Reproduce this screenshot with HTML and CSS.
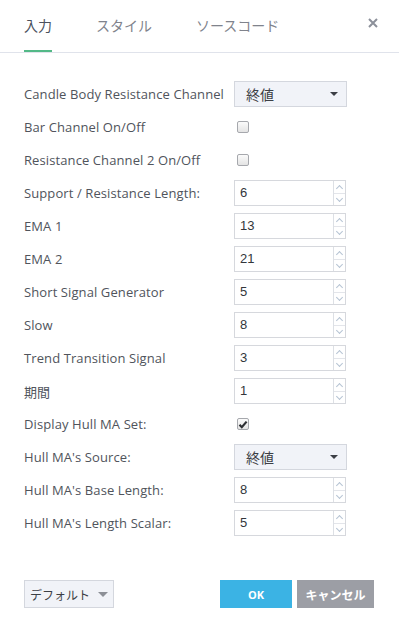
FILE: index.html
```html
<!DOCTYPE html>
<html lang="ja">
<head>
<meta charset="utf-8">
<link rel="stylesheet" href="styles.css">
</head>
<body>
<div class="dialog">
  <div class="header">
    <div class="tabs">
      <div class="tab active">入力</div>
      <div class="tab">スタイル</div>
      <div class="tab">ソースコード</div>
    </div>
    <div class="close">
      <svg width="10" height="10" viewBox="0 0 10 10"><path d="M1 1L9 9M9 1L1 9" stroke="#8c909a" stroke-width="2" stroke-linecap="butt"/></svg>
    </div>
  </div>
  <div class="form">
    <div class="row"><div class="label">Candle Body Resistance Channel</div><div class="select"><span>終値</span><i class="caret"></i></div></div>
    <div class="row"><div class="label">Bar Channel On/Off</div><div class="check"></div></div>
    <div class="row"><div class="label">Resistance Channel 2 On/Off</div><div class="check"></div></div>
    <div class="row"><div class="label">Support / Resistance Length:</div><div class="num"><span class="val">6</span><div class="spin"><b class="up"></b><b class="down"></b></div></div></div>
    <div class="row"><div class="label">EMA 1</div><div class="num"><span class="val">13</span><div class="spin"><b class="up"></b><b class="down"></b></div></div></div>
    <div class="row"><div class="label">EMA 2</div><div class="num"><span class="val">21</span><div class="spin"><b class="up"></b><b class="down"></b></div></div></div>
    <div class="row"><div class="label">Short Signal Generator</div><div class="num"><span class="val">5</span><div class="spin"><b class="up"></b><b class="down"></b></div></div></div>
    <div class="row"><div class="label">Slow</div><div class="num"><span class="val">8</span><div class="spin"><b class="up"></b><b class="down"></b></div></div></div>
    <div class="row"><div class="label">Trend Transition Signal</div><div class="num"><span class="val">3</span><div class="spin"><b class="up"></b><b class="down"></b></div></div></div>
    <div class="row"><div class="label">期間</div><div class="num"><span class="val">1</span><div class="spin"><b class="up"></b><b class="down"></b></div></div></div>
    <div class="row"><div class="label">Display Hull MA Set:</div><div class="check checked"><svg width="10" height="9" viewBox="0 0 10 9"><path d="M1.5 4.8L3.8 7.2L8.6 1.6" stroke="#2d2f33" stroke-width="2.2" fill="none"/></svg></div></div>
    <div class="row"><div class="label">Hull MA's Source:</div><div class="select"><span>終値</span><i class="caret"></i></div></div>
    <div class="row"><div class="label">Hull MA's Base Length:</div><div class="num"><span class="val">8</span><div class="spin"><b class="up"></b><b class="down"></b></div></div></div>
    <div class="row"><div class="label">Hull MA's Length Scalar:</div><div class="num"><span class="val">5</span><div class="spin"><b class="up"></b><b class="down"></b></div></div></div>
  </div>
  <div class="footer">
    <div class="defaults">デフォルト<i class="caret gray"></i></div>
    <div class="actions">
      <div class="btn ok">OK</div>
      <div class="btn cancel">キャンセル</div>
    </div>
  </div>
</div>
</body>
</html>
```
FILE: styles.css
```css
html, body {
  margin: 0;
  padding: 0;
  background: #fff;
}
.dialog {
  width: 399px;
  height: 631px;
  font-family: "Open Sans", "Noto Sans CJK JP", sans-serif;
  color: #4a4e57;
  position: relative;
}
.header {
  height: 52px;
  border-bottom: 1px solid #e0e3eb;
  display: flex;
  justify-content: space-between;
  padding: 0 21px 0 24px;
  box-sizing: content-box;
}
.tabs {
  display: flex;
  gap: 44px;
}
.tab {
  font-family: "Noto Sans CJK JP", sans-serif;
  font-size: 14px;
  color: #80838c;
  padding-top: 14px;
  height: 36px;
  line-height: 22px;
  border-bottom: 2px solid transparent;
  box-sizing: content-box;
}
.tab.active {
  color: #4c525e;
  border-bottom-color: #53b987;
}
.close {
  padding-top: 18px;
}
.close svg {
  display: block;
}
.form {
  padding: 28px 0 0 24px;
  display: flex;
  flex-direction: column;
  gap: 7px;
}
.row {
  display: flex;
  align-items: center;
  height: 26px;
}
.label {
  width: 210px;
  font-size: 13px;
  letter-spacing: 0.1px;
  color: #50545c;
  white-space: nowrap;
}
.select {
  height: 24px;
  border: 1px solid #d4d7de;
  background: #f1f3f8;
  display: flex;
  align-items: center;
  justify-content: space-between;
  padding: 0 8px 0 11px;
  box-sizing: content-box;
  width: 92px;
  font-family: "Noto Sans CJK JP", sans-serif;
  font-size: 14px;
  color: #3c3f45;
}
.caret {
  width: 0;
  height: 0;
  border-left: 4px solid transparent;
  border-right: 4px solid transparent;
  border-top: 4px solid #3c3f45;
}
.caret.gray {
  border-left-width: 5px;
  border-right-width: 5px;
  border-top: 5px solid #8c8f96;
  margin-left: 8px;
}
.check {
  width: 10px;
  height: 10px;
  margin-left: 3px;
  border: 1px solid #a6a8ad;
  border-radius: 2px;
  background: linear-gradient(#fbfbfb, #e4e4e4);
  display: flex;
  align-items: center;
  justify-content: center;
}
.check svg {
  display: block;
}
.num {
  width: 110px;
  height: 24px;
  border: 1px solid #d6d8dd;
  display: flex;
  box-sizing: content-box;
}
.val {
  flex: 1;
  font-family: "Liberation Sans", Arial, sans-serif;
  font-size: 13px;
  color: #33363b;
  line-height: 24px;
  padding-left: 5px;
}
.spin {
  width: 11px;
  border-left: 1px solid #dde0e5;
  display: flex;
  flex-direction: column;
}
.spin b {
  flex: 1;
  position: relative;
}
.spin b.up {
  border-bottom: 1px solid #e3e5ea;
}
.spin b::after {
  content: "";
  position: absolute;
  left: 3px;
  width: 4px;
  height: 4px;
  border-left: 1px solid #b5c3d3;
  border-top: 1px solid #b5c3d3;
}
.spin b.up::after {
  top: 5px;
  transform: rotate(45deg);
}
.spin b.down::after {
  top: 2px;
  transform: rotate(-135deg);
}
.footer {
  position: absolute;
  left: 24px;
  right: 25px;
  top: 580px;
  display: flex;
  justify-content: space-between;
}
.defaults {
  width: 88px;
  height: 26px;
  border: 1px solid #d4d7de;
  background: #f1f3f8;
  display: flex;
  align-items: center;
  justify-content: center;
  font-family: "Noto Sans CJK JP", sans-serif;
  font-size: 12px;
  color: #3c3f45;
}
.actions {
  display: flex;
  gap: 5px;
}
.btn {
  height: 28px;
  display: flex;
  align-items: center;
  justify-content: center;
  color: #fff;
  font-family: "Noto Sans CJK JP", sans-serif;
  font-size: 12px;
  font-weight: bold;
}
.btn.ok {
  width: 72px;
  background: #3bb3e4;
  font-family: "Open Sans", sans-serif;
  font-size: 11px;
}
.btn.cancel {
  width: 77px;
  background: #9c9ea5;
}
```
